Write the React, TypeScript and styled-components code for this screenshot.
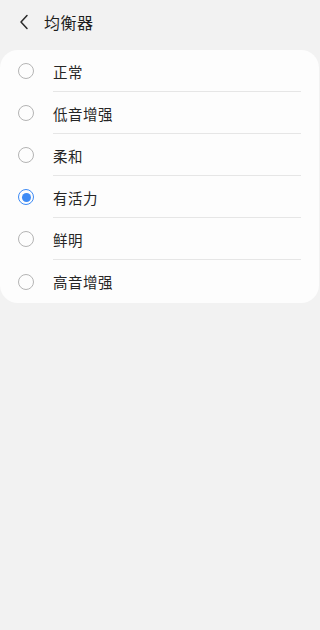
import styled, { createGlobalStyle } from "styled-components";

const GlobalStyle = createGlobalStyle`
  html, body {
    margin: 0;
    padding: 0;
    background: #f2f2f2;
  }
  body {
    font-family: "Noto Sans CJK SC", "Noto Sans", sans-serif;
    -webkit-font-smoothing: antialiased;
  }
`;

const Page = styled.div`
  width: 320px;
  min-height: 630px;
  background: #f2f2f2;
`;

const Header = styled.div`
  display: flex;
  align-items: center;
  height: 44px;
  padding-left: 17px;
`;

const BackBtn = styled.button`
  display: flex;
  align-items: center;
  justify-content: center;
  width: 14px;
  height: 20px;
  padding: 0;
  border: none;
  background: none;
  margin-right: 13px;
`;

const Title = styled.h1`
  margin: 0;
  font-size: 16px;
  font-weight: 400;
  color: #1e1e1e;
  letter-spacing: 0.5px;
`;

const Card = styled.div`
  margin: 6px 1px 0 0;
  background: #fdfdfd;
  border-radius: 18px;
  overflow: hidden;
`;

const Row = styled.label`
  display: flex;
  align-items: center;
  height: 42px;
  padding-left: 18px;
  cursor: pointer;

  &:last-child {
    height: 43px;
  }
`;

const Radio = styled.span<{ $checked: boolean }>`
  box-sizing: border-box;
  flex: none;
  width: 16px;
  height: 16px;
  border-radius: 50%;
  border: 1.5px solid ${(p) => (p.$checked ? "#3e8bf5" : "#b4b4b4")};
  display: flex;
  align-items: center;
  justify-content: center;
  margin-right: 19px;

  &::after {
    content: "";
    display: ${(p) => (p.$checked ? "block" : "none")};
    width: 9px;
    height: 9px;
    border-radius: 50%;
    background: #3e8bf5;
  }
`;

const Label = styled.span<{ $divider: boolean }>`
  flex: 1;
  align-self: stretch;
  display: flex;
  align-items: center;
  margin-right: 18px;
  font-size: 14.5px;
  color: #262626;
  letter-spacing: 0.5px;
  border-bottom: ${(p) => (p.$divider ? "1px solid #e6e6e6" : "none")};
  box-sizing: border-box;
  padding-top: ${(p) => (p.$divider ? "1px" : "0")};
`;

const options = ["正常", "低音增强", "柔和", "有活力", "鲜明", "高音增强"];

export default function App() {
  const selected = 3;
  return (
    <>
      <GlobalStyle />
      <Page>
        <Header>
          <BackBtn aria-label="back">
            <svg width="10" height="16" viewBox="0 0 10 16">
              <path
                d="M8 1.5 L2 8 L8 14.5"
                fill="none"
                stroke="#2a2a2a"
                strokeWidth="1.5"
                strokeLinecap="round"
                strokeLinejoin="round"
              />
            </svg>
          </BackBtn>
          <Title>均衡器</Title>
        </Header>
        <Card>
          {options.map((o, i) => (
            <Row key={o}>
              <Radio $checked={i === selected} />
              <Label $divider={i < options.length - 1}>{o}</Label>
            </Row>
          ))}
        </Card>
      </Page>
    </>
  );
}
